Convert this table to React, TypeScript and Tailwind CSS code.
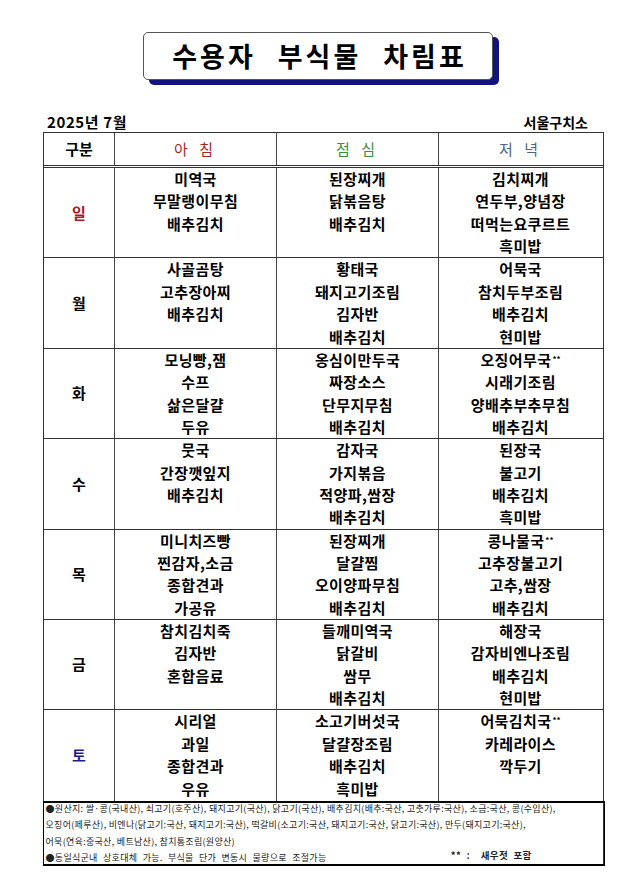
const DAYS = [
  {
    day: "일",
    color: "text-[#b3151c]",
    meals: [
      ["미역국", "무말랭이무침", "배추김치"],
      ["된장찌개", "닭볶음탕", "배추김치"],
      ["김치찌개", "연두부,양념장", "떠먹는요쿠르트", "흑미밥"],
    ],
  },
  {
    day: "월",
    color: "text-black",
    meals: [
      ["사골곰탕", "고추장아찌", "배추김치"],
      ["황태국", "돼지고기조림", "김자반", "배추김치"],
      ["어묵국", "참치두부조림", "배추김치", "현미밥"],
    ],
  },
  {
    day: "화",
    color: "text-black",
    meals: [
      ["모닝빵,잼", "수프", "삶은달걀", "두유"],
      ["옹심이만두국", "짜장소스", "단무지무침", "배추김치"],
      ["오징어무국**", "시래기조림", "양배추부추무침", "배추김치"],
    ],
  },
  {
    day: "수",
    color: "text-black",
    meals: [
      ["뭇국", "간장깻잎지", "배추김치"],
      ["감자국", "가지볶음", "적양파,쌈장", "배추김치"],
      ["된장국", "불고기", "배추김치", "흑미밥"],
    ],
  },
  {
    day: "목",
    color: "text-black",
    meals: [
      ["미니치즈빵", "찐감자,소금", "종합견과", "가공유"],
      ["된장찌개", "달걀찜", "오이양파무침", "배추김치"],
      ["콩나물국**", "고추장불고기", "고추,쌈장", "배추김치"],
    ],
  },
  {
    day: "금",
    color: "text-black",
    meals: [
      ["참치김치죽", "김자반", "혼합음료"],
      ["들깨미역국", "닭갈비", "쌈무", "배추김치"],
      ["해장국", "감자비엔나조림", "배추김치", "현미밥"],
    ],
  },
  {
    day: "토",
    color: "text-[#1c1c8f]",
    meals: [
      ["시리얼", "과일", "종합견과", "우유"],
      ["소고기버섯국", "달걀장조림", "배추김치", "흑미밥"],
      ["어묵김치국**", "카레라이스", "깍두기"],
    ],
  },
];

function Dish({ name }: { name: string }) {
  const star = name.endsWith("**");
  const text = star ? name.slice(0, -2) : name;
  return (
    <div className="h-[22.4px] leading-[22.4px]">
      {text}
      {star && <sup className="text-[8px] tracking-normal ml-[1px]">**</sup>}
    </div>
  );
}

export default function App() {
  return (
    <div className="w-[640px] h-[893px] bg-white text-black font-['Noto_Sans_CJK_KR','Noto_Sans',sans-serif]">
      <div className="pt-[32px] pl-[143px]">
        <div className="w-[350px] h-[48px] bg-white border border-[#555] rounded-[5px] shadow-[6px_5px_0_#13137e] flex items-center justify-center gap-[22px] text-[27px] font-bold tracking-[3px] pl-[3px]">
          <span>수용자</span>
          <span>부식물</span>
          <span>차림표</span>
        </div>
      </div>

      <div className="mt-[31px] h-[21px] ml-[47px] mr-[52px] flex items-end justify-between font-bold leading-[20px]">
        <span className="text-[15px] tracking-[0.6px]">2025년 7월</span>
        <span className="text-[14px]">서울구치소</span>
      </div>

      <div className="ml-[43px] w-[561px] border-[1.5px] border-[#333]">
        <div className="grid grid-cols-[71px_162px_162px_163px] h-[35px] border-b-[3px] border-double border-[#333] text-[15px] leading-[32px] text-center">
          <div className="border-r border-[#444] font-bold">구분</div>
          <div className="border-r border-[#444] text-[#a1282b] tracking-[4px]">아 침</div>
          <div className="border-r border-[#444] text-[#3b8e3b] tracking-[4px]">점 심</div>
          <div className="text-[#4c6684] tracking-[4px]">저 녁</div>
        </div>

        {DAYS.map((d, i) => (
          <div
            key={d.day}
            className={`grid grid-cols-[71px_162px_162px_163px] h-[90.4px] text-center font-bold text-[15px] tracking-[0.4px] ${
              i < DAYS.length - 1 ? "border-b-[1.5px] border-[#333]" : ""
            }`}
          >
            <div className={`border-r border-[#444] flex items-center justify-center ${d.color}`}>{d.day}</div>
            {d.meals.map((m, j) => (
              <div key={j} className={j < 2 ? "border-r border-[#444]" : ""}>
                {m.map((dish) => (
                  <Dish key={dish} name={dish} />
                ))}
              </div>
            ))}
          </div>
        ))}

        <div className="h-[65px] border-t-2 border-black border-x border-b-2 -mx-[1.5px] -mb-[1.5px] px-[2px] text-[9px] tracking-[0.3px] leading-[16.5px] text-[#222]">
          <div className="-mt-[2px]">
            <div>●원산지: 쌀·콩(국내산), 쇠고기(호주산), 돼지고기(국산), 닭고기(국산), 배추김치(배추:국산, 고춧가루:국산), 소금:국산, 콩(수입산),</div>
            <div>오징어(페루산), 비엔나(닭고기:국산, 돼지고기:국산), 떡갈비(소고기:국산, 돼지고기:국산, 닭고기:국산), 만두(돼지고기:국산),</div>
            <div>어묵(연육:중국산, 베트남산), 참치통조림(원양산)</div>
            <div className="flex justify-between pr-[70px]">
              <span className="[word-spacing:3px]">●동일식군내 상호대체 가능. 부식물 단가 변동시 물량으로 조절가능</span>
              <span className="font-bold -mt-[3px] text-[9.5px] [word-spacing:3px]">** : &nbsp;새우젓 포함</span>
            </div>
          </div>
        </div>
      </div>
    </div>
  );
}
